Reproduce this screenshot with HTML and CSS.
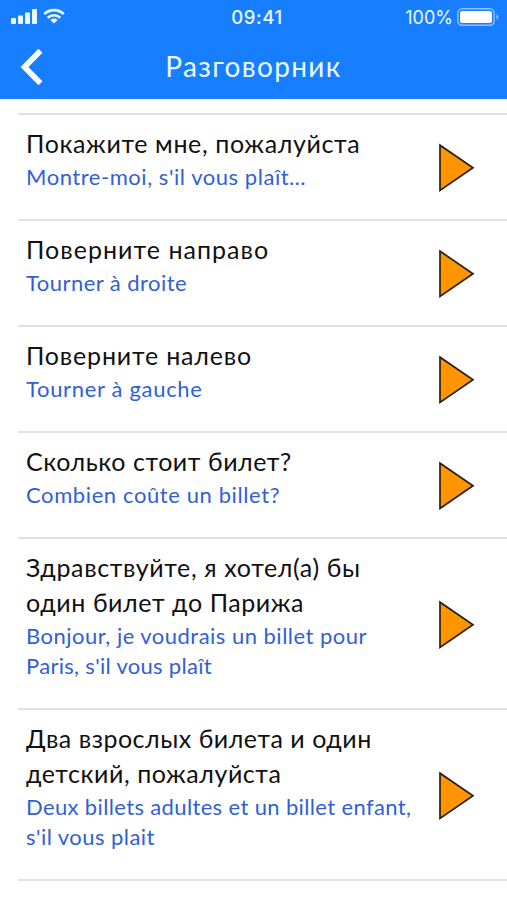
FILE: index.html
```html
<!DOCTYPE html>
<html lang="ru">
<head>
<meta charset="utf-8">
<title>Разговорник</title>
<link rel="stylesheet" href="styles.css">
</head>
<body>
<svg width="0" height="0" class="defs"><symbol id="play" viewBox="0 0 38 50"><path d="M2 2.2V47.5L35 24.8Z" fill="#ff9500" stroke="#29200f" stroke-width="1.7"/></symbol></svg>
<header class="header">
  <div class="status">
    <div class="signal">
      <svg width="28" height="18" viewBox="0 0 28 18" fill="#e9f9ff"><rect x="1" y="11" width="5" height="6" rx="1"/><rect x="8" y="8.5" width="5" height="8.5" rx="1"/><rect x="15" y="5.5" width="5" height="11.5" rx="1"/><rect x="22" y="2" width="5" height="15" rx="1"/></svg>
      <svg width="22" height="18" viewBox="0 0 22 18" fill="none" stroke="#e9f9ff" stroke-width="2.6"><path d="M1.2 7.1A14 14 0 0 1 20.8 7.1M4.7 10.8A9 9 0 0 1 17.3 10.8"/><path d="M11 16.5L7.3 13A5.4 5.4 0 0 1 14.7 13Z" fill="#e9f9ff" stroke="none"/></svg>
    </div>
    <div class="clock">09:41</div>
    <div class="power"><span class="percent">100%</span>
      <svg width="43" height="18" viewBox="0 0 43 18"><rect x=".8" y=".8" width="36.4" height="16.4" rx="4.5" fill="none" stroke="#8fc4ff" stroke-width="1.4"/><rect x="3" y="3" width="32" height="12" rx="2" fill="#fff"/><path d="M39.5 6.3Q41.5 7 41.5 9T39.5 11.7Z" fill="#8fc4ff"/></svg>
    </div>
  </div>
  <div class="nav">
    <svg class="back" width="24" height="38" viewBox="0 0 24 38"><path d="M20.5 2.8L4.5 19L20.5 35.2" fill="none" stroke="#fff" stroke-width="5.6"/></svg>
    <h1 class="heading">Разговорник</h1>
  </div>
</header>
<main class="list">
  <article class="row"><div class="text"><p class="title"><span class="t1">Покажите мне, пожалуйста</span></p><p class="sub"><span class="s1">Montre-moi, s'il vous plaît…</span></p></div><svg class="play"><use href="#play"/></svg></article>
  <article class="row"><div class="text"><p class="title"><span class="t2">Поверните направо</span></p><p class="sub"><span class="s2">Tourner à droite</span></p></div><svg class="play"><use href="#play"/></svg></article>
  <article class="row"><div class="text"><p class="title"><span class="t3">Поверните налево</span></p><p class="sub"><span class="s3">Tourner à gauche</span></p></div><svg class="play"><use href="#play"/></svg></article>
  <article class="row"><div class="text"><p class="title"><span class="t4">Сколько стоит билет?</span></p><p class="sub"><span class="s4">Combien coûte un billet?</span></p></div><svg class="play"><use href="#play"/></svg></article>
  <article class="row"><div class="text"><p class="title"><span class="t5">Здравствуйте, я хотел(а) бы</span><br><span class="t6">один билет до Парижа</span></p><p class="sub"><span class="s5">Bonjour, je voudrais un billet pour</span><br><span class="s6">Paris, s'il vous plaît</span></p></div><svg class="play"><use href="#play"/></svg></article>
  <article class="row"><div class="text"><p class="title"><span class="t7">Два взрослых билета и один</span><br><span class="t8">детский, пожалуйста</span></p><p class="sub"><span class="s7">Deux billets adultes et un billet enfant,</span><br><span class="s8">s'il vous plait</span></p></div><svg class="play"><use href="#play"/></svg></article>
</main>
</body>
</html>
```
FILE: styles.css
```css
* { box-sizing: border-box; margin: 0; padding: 0; }
body { height: 900px; overflow: hidden; background: #fff; font-family: Lato, "Open Sans", sans-serif; }
.defs { display: none; }
.header { height: 99px; background: #167eff; color: #e9f9ff; }
.status { display: grid; grid-template-columns: 1fr 60px 1fr; height: 34px; padding: 0 9px 0 10px; align-items: center; font-family: Inter, sans-serif; }
.signal { display: flex; gap: 5px; margin-top: -2px; }
.clock { padding-left: 6px; text-align: center; font-size: 18.5px; font-weight: 500; letter-spacing: .6px; white-space: nowrap; }
.power { display: flex; justify-content: flex-end; align-items: center; gap: 4px; font-size: 18px; }
.power svg { margin-right: -2px; }
.nav { display: grid; grid-template-columns: 60px 1fr 60px; height: 64px; align-items: center; }
.back { margin: 2px 0 0 20px; }
.heading { text-align: center; font-size: 28px; font-weight: 400; letter-spacing: 1.35px; line-height: 40px; white-space: nowrap; }
.list { margin: 14px 0 0 18px; border-top: 2px solid #e2e2e4; }
.row { display: flex; justify-content: space-between; align-items: center; padding: 11px 31px 28px 8px; border-bottom: 2px solid #e2e2e4; }
.text { white-space: nowrap; }
.title { font-size: 25px; line-height: 35px; color: #111; }
.sub { padding-top: 1px; margin-bottom: -1px; font-size: 22px; line-height: 30px; color: #315fd5; }
.play { width: 38px; height: 50px; margin: 17px 0 -2px; flex: none; }
.t1 { letter-spacing: .64px; }
.t2 { letter-spacing: 1.04px; }
.t3 { letter-spacing: .82px; }
.t4 { letter-spacing: .56px; }
.t5 { letter-spacing: .64px; }
.t6 { letter-spacing: .58px; }
.t7 { letter-spacing: .52px; }
.t8 { letter-spacing: .56px; }
.s1 { letter-spacing: .54px; }
.s2 { letter-spacing: .46px; }
.s3 { letter-spacing: .68px; }
.s4 { letter-spacing: .6px; }
.s5 { letter-spacing: .48px; }
.s6 { letter-spacing: .3px; }
.s7 { letter-spacing: .36px; }
.s8 { letter-spacing: .45px; }
```
